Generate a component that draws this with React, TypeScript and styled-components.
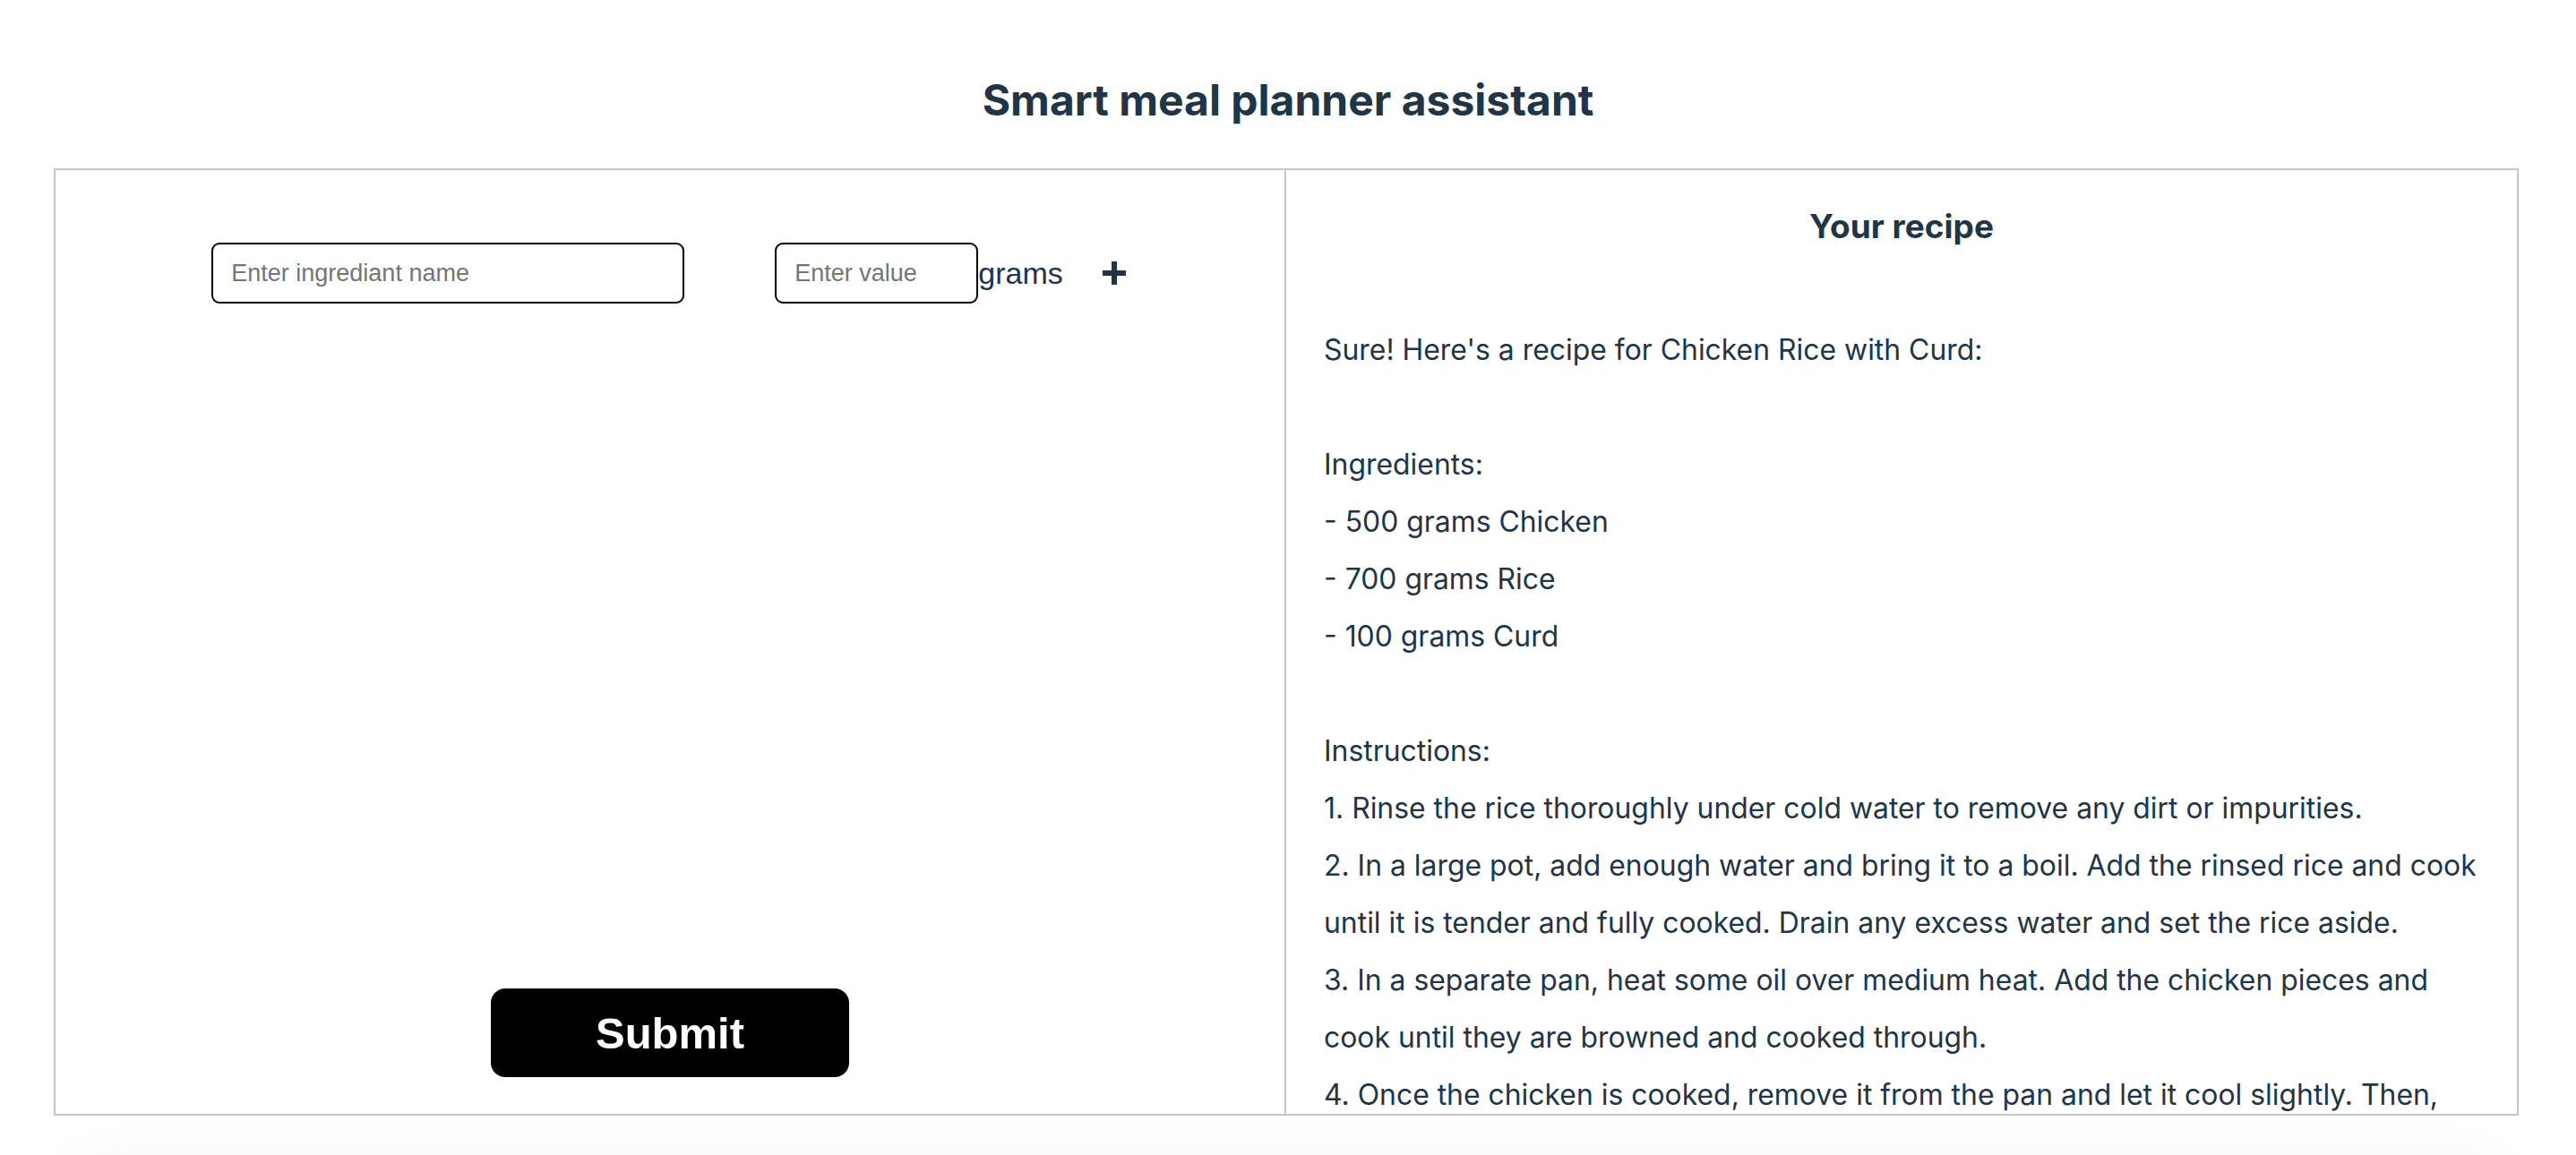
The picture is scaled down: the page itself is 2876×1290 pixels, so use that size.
import React from "react";
import styled, { createGlobalStyle } from "styled-components";

const GlobalStyle = createGlobalStyle`
  html, body {
    margin: 0;
    padding: 0;
    background: #ffffff;
  }
  body {
    font-family: Inter, "Liberation Sans", sans-serif;
    color: #213547;
  }
  * { box-sizing: border-box; }
`;

const Page = styled.div`
  width: 2876px;
  display: flex;
  flex-direction: column;
  align-items: flex-start;
`;

const Title = styled.h1`
  align-self: stretch;
  margin: 0;
  padding: 83px 0 0;
  height: 188px;
  text-align: center;
  font-family: Inter, sans-serif;
  font-weight: 700;
  font-size: 48px;
  line-height: 58px;
  color: #213547;
`;

const Board = styled.div`
  margin-left: 60px;
  width: 2752px;
  height: 1058px;
  border: 2px solid #c6c6c6;
  display: grid;
  grid-template-columns: 1fr 1fr;
  background: #fff;
`;

const LeftPanel = styled.section`
  border-right: 2px solid #c6c6c6;
  display: flex;
  flex-direction: column;
  align-items: center;
  justify-content: space-between;
  padding: 81px 0 41px;
`;

const IngredientRow = styled.div`
  display: flex;
  align-items: center;
  justify-content: center;
  margin-left: -3px;
`;

const TextInput = styled.input<{ $w: number; $gapAfter?: number }>`
  width: ${(p) => p.$w}px;
  height: 68px;
  margin-right: ${(p) => p.$gapAfter ?? 0}px;
  border: 2px solid #000;
  border-radius: 9px;
  padding: 0 20px;
  font-family: "Liberation Sans", Arial, sans-serif;
  font-size: 27px;
  color: #000;
  background: #fff;
  outline: none;
  &::placeholder {
    color: #757575;
  }
`;

const Unit = styled.span`
  font-family: "Liberation Sans", Arial, sans-serif;
  font-size: 34px;
  color: #213547;
  margin-right: 44px;
  line-height: 1;
`;

const AddButton = styled.button`
  width: 26px;
  height: 26px;
  padding: 0;
  border: none;
  background: transparent;
  display: flex;
  align-items: center;
  justify-content: center;
  cursor: pointer;
`;

const SubmitButton = styled.button`
  width: 400px;
  height: 99px;
  border: none;
  border-radius: 16px;
  background: #000;
  color: #fff;
  font-family: "Liberation Sans", Arial, sans-serif;
  font-weight: 700;
  font-size: 49px;
  cursor: pointer;
`;

const RightPanel = styled.section`
  overflow: hidden;
  padding: 0 30px 0 42px;
  display: flex;
  flex-direction: column;
`;

const RecipeTitle = styled.h2`
  margin: 41px 12px 0 0;
  text-align: center;
  font-family: Inter, sans-serif;
  font-weight: 700;
  font-size: 37px;
  line-height: 44px;
  color: #213547;
`;

const RecipeText = styled.div`
  margin-top: 84px;
  white-space: pre-wrap;
  font-family: Inter, sans-serif;
  font-size: 31.9px;
  line-height: 64px;
  color: #213547;
`;

const ShadowBlock = styled.div`
  margin: 66px 0 0 100px;
  width: 2676px;
  height: 300px;
  background: #fff;
  box-shadow: 0 0 70px rgba(0, 0, 0, 0.08);
`;

const PlusIcon = () => (
  <svg width="26" height="26" viewBox="0 0 26 26">
    <rect x="10" y="0" width="6" height="26" fill="#213547" />
    <rect x="0" y="10" width="26" height="6" fill="#213547" />
  </svg>
);

const recipe = `Sure! Here's a recipe for Chicken Rice with Curd:

Ingredients:
- 500 grams Chicken
- 700 grams Rice
- 100 grams Curd

Instructions:
1. Rinse the rice thoroughly under cold water to remove any dirt or impurities.
2. In a large pot, add enough water and bring it to a boil. Add the rinsed rice and cook until it is tender and fully cooked. Drain any excess water and set the rice aside.
3. In a separate pan, heat some oil over medium heat. Add the chicken pieces and cook until they are browned and cooked through.
4. Once the chicken is cooked, remove it from the pan and let it cool slightly. Then, shred the chicken into bite-sized pieces.
5. In a large bowl, combine the cooked rice, shredded chicken and curd. Mix well.
6. Season with salt and pepper to taste and serve.`;

export default function App() {
  return (
    <Page>
      <GlobalStyle />
      <Title>Smart meal planner assistant</Title>
      <Board>
        <LeftPanel>
          <IngredientRow>
            <TextInput $w={528} $gapAfter={101} placeholder="Enter ingrediant name" />
            <TextInput $w={227} placeholder="Enter value" />
            <Unit>grams</Unit>
            <AddButton aria-label="Add ingredient">
              <PlusIcon />
            </AddButton>
          </IngredientRow>
          <SubmitButton>Submit</SubmitButton>
        </LeftPanel>
        <RightPanel>
          <RecipeTitle>Your recipe</RecipeTitle>
          <RecipeText>{recipe}</RecipeText>
        </RightPanel>
      </Board>
      <ShadowBlock />
    </Page>
  );
}
